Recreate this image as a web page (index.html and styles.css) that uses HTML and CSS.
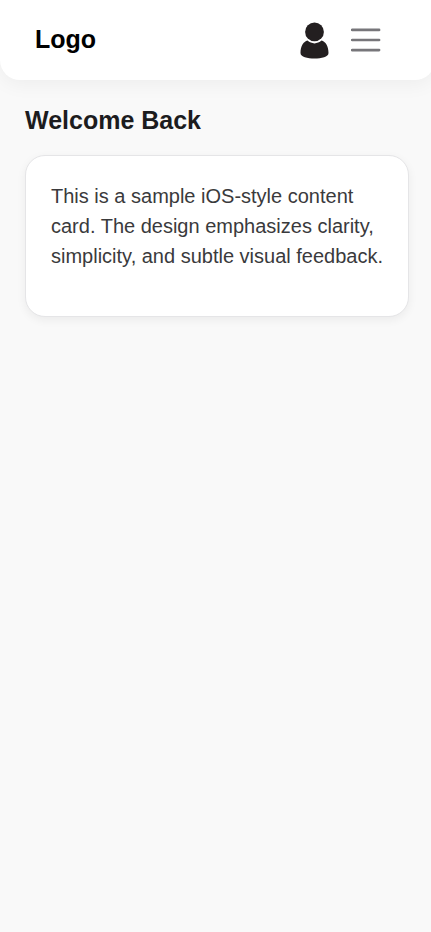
FILE: index.html
```html
<!DOCTYPE html>
<html lang="en">
<head>
<meta charset="utf-8">
<title>Logo</title>
<link rel="stylesheet" href="styles.css">
</head>
<body>
<header class="navbar">
  <div class="logo">Logo</div>
  <nav class="actions">
    <svg class="user" viewBox="0 0 30 38" aria-hidden="true">
      <path d="M.5 32C.5 25 3.500 20.800 7.500 19.600C11.500 23.300 17.500 23.300 21.500 19.600C25.500 20.800 28.500 25 28.500 32C28.500 36 21.500 37.500 14.500 37.500S.5 36 .5 32Z"/>
      <circle cx="14.500" cy="10.900" r="9.400"/>
    </svg>
    <svg class="menu" viewBox="0 0 30 24" aria-hidden="true">
      <path d="M1.100 1.900H28.100M1.100 12H28.100M1.100 22.100H28.100"/>
    </svg>
  </nav>
</header>
<main class="content">
  <h1 class="title">Welcome Back</h1>
  <section class="card">
    <p>This is a sample iOS-style content card. The design emphasizes clarity, simplicity, and subtle visual feedback.</p>
  </section>
</main>
</body>
</html>
```
FILE: styles.css
```css
* { box-sizing: border-box; }
html { overflow-x: hidden; }
body {
  margin: 0;
  min-height: 100vh;
  background: #f9f9f9;
  font-family: "Liberation Sans", Arial, sans-serif;
  color: #1c1c1e;
}
.navbar {
  display: flex;
  align-items: center;
  justify-content: space-between;
  width: 435px;
  height: 80px;
  padding: 0 54px 0 35px;
  background: #fff;
  border-radius: 0 0 20px 20px;
  box-shadow: 0 4px 20px rgba(0, 0, 0, 0.05);
}
.logo { font-size: 25px; font-weight: 700; color: #000; line-height: 30px; margin-bottom: 2px; }
.actions { display: flex; align-items: center; gap: 21px; }
.user { width: 30px; height: 38px; fill: #231f20; }
.menu { width: 30px; height: 24px; fill: none; stroke: #77767a; stroke-width: 2.6; stroke-linecap: round; }
.content { width: 431px; padding: 25px 22px 25px 25px; }
.title { margin: 0 0 20px; font-size: 25px; line-height: 30px; font-weight: 700; }
.card {
  height: 162px;
  padding: 25px;
  background: #fff;
  border: 1px solid #e5e5e7;
  border-radius: 20px;
  box-shadow: 0 3px 10px rgba(0, 0, 0, 0.06);
}
.card p { margin: 0; font-size: 20px; line-height: 30px; color: #3a3a3c; }
```
